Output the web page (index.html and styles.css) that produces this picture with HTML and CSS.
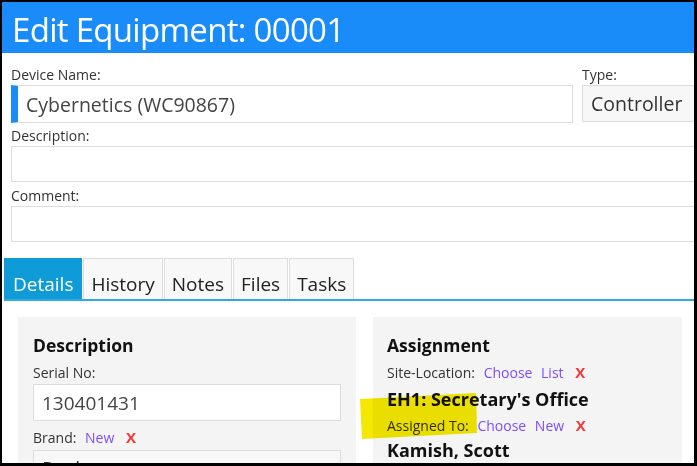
FILE: index.html
```html
<!DOCTYPE html>
<html lang="en">
<head>
    <meta charset="UTF-8">
    <meta name="viewport" content="width=device-width, initial-scale=1.0">
    <title>Edit Equipment</title>
    <link rel="stylesheet" href="styles.css">
</head>
<body>

    <div class="app">
        <h1 class="title">Edit Equipment: 00001</h1>

        <div class="fields">
            <div class="row">
                <div class="field name-field">
                    <label for="deviceName">Device Name:</label>
                    <input type="text" id="deviceName" class="input accent" value="Cybernetics (WC90867)" />
                </div>
                <div class="field type-field">
                    <label>Type:</label>
                    <div class="select">Controller</div>
                </div>
            </div>

            <div class="field gap-desc">
                <label>Description:</label>
                <div class="box"></div>
            </div>

            <div class="field gap-comment">
                <label>Comment:</label>
                <div class="box"></div>
            </div>
        </div>

        <ul class="tabs">
            <li class="tab active">Details</li>
            <li class="tab">History</li>
            <li class="tab">Notes</li>
            <li class="tab">Files</li>
            <li class="tab">Tasks</li>
        </ul>

        <div class="panels">
            <section class="panel panel-left">
                <h3>Description</h3>
                <label for="serial" class="small">Serial No:</label>
                <input type="text" id="serial" class="input serial" value="130401431" />
                <div class="label-row brand-row">
                    Brand: <a href="#">New</a> <span class="remove">X</span>
                </div>
                <div class="select brand">
                    <span>Ruckus</span>
                    <svg class="caret" width="12" height="8" viewBox="0 0 12 8"><path d="M1 1h10L6 7z" fill="#777"/></svg>
                </div>
            </section>

            <section class="panel panel-right">
                <h3>Assignment</h3>
                <div class="label-row site-row">
                    Site-Location: <a href="#">Choose</a> <a href="#">List</a> <span class="remove">X</span>
                </div>
                <div class="value site-value">EH1: Secretary's Office</div>
                <div class="label-row assign-row">
                    Assigned To: <a href="#">Choose</a> <a href="#">New</a> <span class="remove">X</span>
                </div>
                <div class="value assign-value">Kamish, Scott</div>
            </section>
        </div>

        <!-- marker stroke over the assignment fields -->
        <div class="highlight"></div>
    </div>

</body>
</html>
```

FILE: styles.css
```css
/* Global reset */
* {
    margin: 0;
    padding: 0;
    box-sizing: border-box;
}

body {
    font-family: "Open Sans", Arial, sans-serif;
    background-color: #000;
    width: 697px;
    height: 466px;
    overflow: hidden;
}

.app {
    position: relative;
    background-color: #fff;
    margin: 2px 3px 0 2px;
    height: 461px;
    overflow: hidden;
}

.title {
    background-color: #1a8cfa;
    color: #fff;
    font-weight: normal;
    font-size: 33px;
    letter-spacing: -0.7px;
    height: 51px;
    line-height: 46px;
    padding: 5px 0 0 10px;
    white-space: nowrap;
}

/* Top form */
.fields {
    padding: 14px 0 0 9px;
    width: 760px;
}

.row {
    display: flex;
    gap: 9px;
}

.field label,
.label-row,
label.small {
    display: block;
    font-size: 14px;
    line-height: 16px;
    color: #333;
    margin-bottom: 2px;
}

.name-field {
    width: 562px;
}

.type-field {
    width: 150px;
}

.gap-desc {
    margin-top: 5px;
}

.gap-comment {
    margin-top: 6px;
}

.input {
    display: block;
    width: 100%;
    height: 38px;
    border: 1px solid #ddd;
    background-color: #fff;
    font-family: inherit;
    font-size: 19.5px;
    color: #444;
    padding: 0 8px;
    outline: none;
}

.input.accent {
    border-left: 7px solid #1a8cfa;
}

.select {
    height: 37px;
    border: 1px solid #ddd;
    background-color: #f7f7f7;
    font-size: 19.5px;
    line-height: 35px;
    color: #333;
    padding-left: 8px;
    white-space: nowrap;
}

.box {
    height: 36px;
    border: 1px solid #ddd;
    background-color: #fff;
}

/* Tabs */
.tabs {
    list-style: none;
    display: flex;
    gap: 1px;
    margin: 16px 0 0 2px;
    border-bottom: 2px solid #31aae0;
}

.tab {
    height: 41px;
    line-height: 30px;
    font-size: 19px;
    color: #222;
    padding: 10px 7px 0;
    background-color: #f8f8f8;
    border: 1px solid #ddd;
    border-bottom: none;
}

.tab.active {
    background-color: #0f9bd7;
    border-color: #0f9bd7;
    color: #fff;
    padding: 10px 8px 0;
}

/* Panels */
.panels {
    display: flex;
    gap: 17px;
    padding: 16px 12px 0 16px;
}

.panel {
    background-color: #f4f4f4;
    padding: 16px 15px 20px;
    height: 160px;
}

.panel-left {
    width: 338px;
}

.panel-right {
    width: 309px;
    padding-left: 14px;
}

.panel h3 {
    font-size: 17.5px;
    line-height: 24px;
    color: #111;
    margin-bottom: 8px;
}

label.small {
    margin-bottom: 3px;
}

.input.serial {
    height: 37px;
    font-size: 19px;
}

.brand-row {
    margin-top: 8px;
}

.select.brand {
    margin-top: 4px;
    display: flex;
    justify-content: space-between;
    align-items: center;
    padding-right: 8px;
}

.label-row a {
    color: #7c4dff;
    text-decoration: none;
    margin-left: 5px;
}

.remove {
    color: #f03a3a;
    font-weight: bold;
    font-size: 15px;
    margin-left: 8px;
}

.panel-right h3 {
    margin-bottom: 7px;
}

.value {
    font-size: 18px;
    font-weight: bold;
    line-height: 24px;
    color: #111;
}

.site-value {
    margin-top: 6px;
}

.assign-row {
    margin-top: 6px;
}

.assign-value {
    margin-top: 4px;
}

.highlight {
    position: absolute;
    left: 358px;
    top: 391px;
    width: 118px;
    height: 47px;
    background-color: #f5e800;
    mix-blend-mode: multiply;
    clip-path: polygon(0 6px, 116px 0, 117px 40px, 2px 46px);
}
```
